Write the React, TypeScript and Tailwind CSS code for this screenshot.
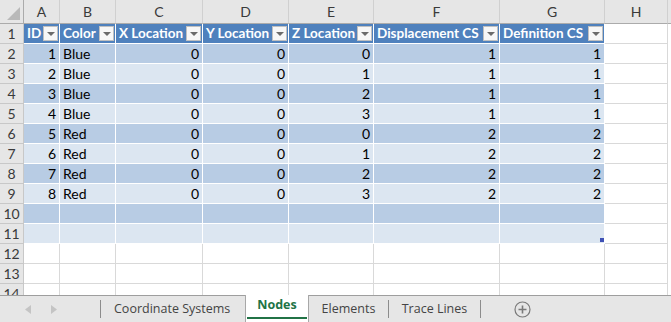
import { Fragment } from 'react';

const columns = [
  { letter: 'A', title: 'ID', width: 36 },
  { letter: 'B', title: 'Color', width: 56 },
  { letter: 'C', title: 'X Location', width: 87 },
  { letter: 'D', title: 'Y Location', width: 86 },
  { letter: 'E', title: 'Z Location', width: 85 },
  { letter: 'F', title: 'Displacement CS', width: 126 },
  { letter: 'G', title: 'Definition CS', width: 105 },
];

const nodes: (string | number)[][] = [
  [1, 'Blue', 0, 0, 0, 1, 1],
  [2, 'Blue', 0, 0, 1, 1, 1],
  [3, 'Blue', 0, 0, 2, 1, 1],
  [4, 'Blue', 0, 0, 3, 1, 1],
  [5, 'Red', 0, 0, 0, 2, 2],
  [6, 'Red', 0, 0, 1, 2, 2],
  [7, 'Red', 0, 0, 2, 2, 2],
  [8, 'Red', 0, 0, 3, 2, 2],
  ['', '', '', '', '', '', ''],
  ['', '', '', '', '', '', ''],
];

const cellFont = { fontFamily: 'Lato, "Liberation Sans", sans-serif' };
const uiFont = { fontFamily: '"Open Sans", "Noto Sans", sans-serif' };

function FilterButton() {
  return (
    <span className="flex h-[15px] w-[15px] shrink-0 items-center justify-center border border-[#c0c0c0] bg-[#f7f7f7]">
      <svg width="8" height="4" viewBox="0 0 8 4"><path d="M0 0h8L4 4z" fill="#6b6b6b" /></svg>
    </span>
  );
}

function RowHeader({ n }: { n: number }) {
  return (
    <div className="flex h-[20px] items-center justify-center overflow-hidden border-r border-b border-[#c8c8c8] bg-[#e6e6e6] text-[14px] text-[#3a3a3a]">
      {n}
    </div>
  );
}

function BlankRow({ n }: { n: number }) {
  return (
    <>
      <RowHeader n={n} />
      {columns.map((c) => <div key={c.letter} className="h-[20px] border-r border-b border-[#d9d9d9] bg-white" />)}
      <div className="h-[20px] border-r border-b border-[#d9d9d9] bg-white" />
      <div className="h-[20px] bg-white" />
    </>
  );
}

export default function App() {
  return (
    <div className="flex h-[322px] w-[671px] flex-col overflow-hidden bg-white" style={cellFont}>
      <div className="grid h-[295px] grid-cols-[24px_36px_56px_87px_86px_85px_126px_105px_63px_1fr] content-start overflow-hidden">
        {/* column letters */}
        <div className="relative h-[24px] border-r border-b border-[#ababab] bg-[#e6e6e6]">
          <svg className="absolute right-[3px] bottom-[3px]" width="13" height="13" viewBox="0 0 13 13"><path d="M13 0v13H0z" fill="#b9b9b9" /></svg>
        </div>
        {columns.map((c) => (
          <div key={c.letter} className="flex h-[24px] items-center justify-center border-r border-b border-[#ababab] border-r-[#d0d0d0] bg-[#e6e6e6] text-[14px] text-[#3a3a3a]">
            {c.letter}
          </div>
        ))}
        <div className="flex h-[24px] items-center justify-center border-r border-b border-[#ababab] border-r-[#d0d0d0] bg-[#e6e6e6] text-[14px] text-[#3a3a3a]">H</div>
        <div className="h-[24px] border-b border-[#ababab] bg-[#e6e6e6]" />

        {/* table header */}
        <RowHeader n={1} />
        {columns.map((c) => (
          <div key={c.title} className="flex h-[20px] items-center justify-between gap-[2px] overflow-hidden border-r border-b border-white bg-[#4f81bd] pr-[1px] pl-[3px] text-[13.5px] font-bold whitespace-nowrap text-white">
            <span>{c.title}</span>
            <FilterButton />
          </div>
        ))}
        <div className="h-[20px] border-r border-b border-[#d9d9d9] bg-white" />
        <div className="h-[20px] bg-white" />

        {nodes.map((row, i) => (
          <Fragment key={i}>
            <RowHeader n={i + 2} />
            {row.map((v, j) => (
              <div
                key={j}
                className={`relative flex h-[20px] items-center border-r border-b border-white px-[3px] text-[14px] text-black ${i % 2 === 0 ? 'bg-[#b8cce4]' : 'bg-[#dce6f1]'} ${j === 1 ? 'justify-start' : 'justify-end'}`}
              >
                {v}
                {i === nodes.length - 1 && j === row.length - 1 && (
                  <span className="absolute right-[0px] bottom-[1px] h-[4px] w-[4px] bg-[#3f51b5]" />
                )}
              </div>
            ))}
            <div className="h-[20px] border-r border-b border-[#d9d9d9] bg-white" />
            <div className="h-[20px] bg-white" />
          </Fragment>
        ))}

        <BlankRow n={12} />
        <BlankRow n={13} />
        <BlankRow n={14} />
      </div>

      {/* sheet tabs */}
      <div className="flex h-[27px] items-stretch border-t border-[#9e9e9e] bg-[#e6e6e6] text-[12.5px] text-[#444]" style={uiFont}>
        <div className="flex w-[100px] items-center gap-[20px] pl-[25px]">
          <svg width="6" height="9" viewBox="0 0 6 9"><path d="M6 0v9L0 4.5z" fill="#c4c4c4" /></svg>
          <svg width="6" height="9" viewBox="0 0 6 9"><path d="M0 0v9l6-4.5z" fill="#c4c4c4" /></svg>
        </div>
        <div className="my-[4px] w-px bg-[#8c8c8c]" />
        <div className="flex w-[144px] items-center pl-[13px]">Coordinate Systems</div>
        <div className="-mt-px flex w-[64px] flex-col border-x border-[#a8a8a8] bg-white">
          <div className="flex flex-1 items-center justify-center pb-[1px] font-bold text-[#217346]">Nodes</div>
          <div className="mx-px mb-[3px] h-[2px] bg-[#217346]" />
        </div>
        <div className="flex w-[79px] items-center justify-center">Elements</div>
        <div className="my-[4px] w-px bg-[#8c8c8c]" />
        <div className="flex w-[91px] items-center justify-center">Trace Lines</div>
        <div className="my-[4px] w-px bg-[#8c8c8c]" />
        <div className="flex w-[82px] items-center justify-center">
          <svg width="17" height="17" viewBox="0 0 17 17">
            <circle cx="8.5" cy="8.5" r="7.5" fill="none" stroke="#7a7a7a" strokeWidth="1.2" />
            <path d="M8.5 4.5v8M4.5 8.5h8" stroke="#7a7a7a" strokeWidth="1.6" />
          </svg>
        </div>
      </div>
    </div>
  );
}
